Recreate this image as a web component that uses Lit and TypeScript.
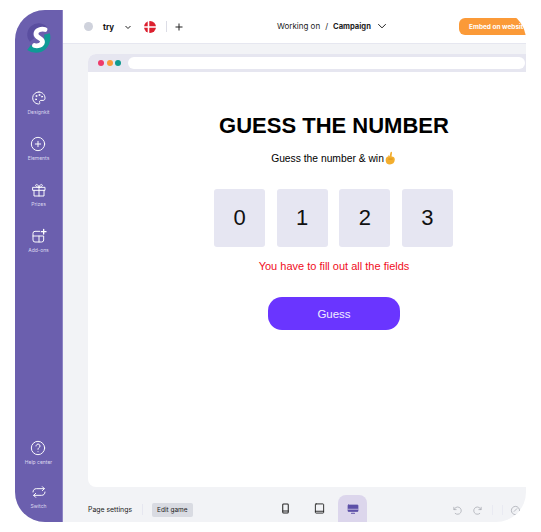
import { LitElement, html, css, svg } from "lit";
import { customElement } from "lit/decorators.js";

const I = (body: unknown, s = 16, vb = 24, sw = 1.45) => html`<svg width=${s} height=${s} viewBox="0 0 ${vb} ${vb}" fill="none" stroke="currentColor" stroke-width=${sw} stroke-linecap="round" stroke-linejoin="round">${body}</svg>`;

const side = [
  ["Designkit", svg`<path d="M12 3a9 9 0 0 0-1 18c2 .2 2.600-1 2-2.400-.7-1.600.2-3 1.900-3H18c2 0 3-1.300 3-3.400C21 7 17 3 12 3z"/><circle cx="8" cy="9" r=".8"/><circle cx="12.500" cy="7.500" r=".8"/><circle cx="16.500" cy="10" r=".8"/><circle cx="7.500" cy="14" r=".8"/>`],
  ["Elements", svg`<circle cx="12" cy="12" r="10"/><path d="M12 8v8M8 12h8"/>`],
  ["Prizes", svg`<rect x="3" y="8" width="18" height="4.500"/><path d="M4.500 12.500V21h15v-8.500M12 8v13M12 8C9 8 7 6.800 7 5s3.500-2.500 5 3c1.500-5.500 5-4.800 5-3s-2 3-5 3z"/>`],
  ["Add-ons", svg`<path d="M13 5H6a3 3 0 0 0-3 3v10a3 3 0 0 0 3 3h10a3 3 0 0 0 3-3v-6H3M12 12v9"/><path d="M19 2v7M15.500 5.500h7" stroke-width="2"/>`],
];

@customElement("app-root")
export class AppRoot extends LitElement {
  static styles = css`
    :host { display: block; width: 541px; height: 532px; background: #fff; font-family: "Inter", "Liberation Sans", sans-serif; padding: 10px 15px; box-sizing: border-box; overflow: hidden; }
    .win { width: 511px; height: 512px; border-radius: 30px; overflow: hidden; display: flex; background: #f2f3f6; }
    .side { width: 48px; flex: none; background: #6b5fae; border-right: 1px solid #8d84c4; box-sizing: border-box; color: #fff; display: flex; flex-direction: column; align-items: center; padding-top: 11px; }
    .logo { margin-bottom: 35px; display: block; flex: none; }
    .item { display: flex; flex-direction: column; align-items: center; gap: 3px; font-size: 5px; line-height: 6px; height: 46px; flex: none; color: #dcd9ef; white-space: nowrap; }
    .item svg { color: #fff; display: block; }
    .item.help { height: 44px; }
    .item.sw { height: 38px; }
    .spacer { flex: 1; }
    .main { flex: 1; min-width: 0; display: flex; flex-direction: column; }
    .top { height: 34px; flex: none; background: #fff; border-bottom: 1px solid #e6e7f0; box-sizing: border-box; display: flex; align-items: center; font-size: 8px; color: #222; padding-left: 21px; position: relative; }
    .dot { width: 9px; height: 9px; border-radius: 50%; background: #cfd2dc; }
    .try { font-weight: 700; font-size: 8px; margin-left: 10px; color: #111; }
    .flag { margin-left: 12px; display: block; }
    .vsep { width: 1px; height: 11px; background: #dcdde6; margin-left: 10px; }
    .plus { margin-left: 8px; display: block; color: #222; }
    .chev { display: block; margin-left: 10px; color: #222; }
    .center { position: absolute; left: 214px; top: 0; height: 32px; display: flex; align-items: center; gap: 5px; white-space: nowrap; }
    .center b { font-weight: 700; font-size: 7.600px; }
    .center .chev { margin-left: 1px; }
    .embed { position: absolute; left: 396px; top: 8px; width: 80px; height: 17px; background: #fb9a38; color: #fff; font-size: 6.500px; font-weight: 700; border-radius: 6px; display: flex; align-items: center; padding-left: 10px; box-sizing: border-box; white-space: nowrap; overflow: hidden; }
    .stage { flex: 1; min-height: 0; padding: 10px 0 0 25px; display: flex; flex-direction: column; }
    .browser { width: 438px; height: 433px; flex: none; background: #fff; border-radius: 8px 0 0 8px; overflow: hidden; display: flex; flex-direction: column; }
    .bar { height: 18px; flex: none; background: #e6e6f0; display: flex; align-items: center; padding-left: 10px; gap: 2.500px; }
    .bar i { width: 6px; height: 6px; border-radius: 50%; display: block; }
    .addr { flex: 1; height: 12px; background: #fff; border-radius: 6px; margin: 0 1px 0 4px; }
    .game { flex: 1; display: flex; flex-direction: column; align-items: center; padding-left: 54px; color: #000; font-family: "Liberation Sans", Arial, sans-serif; }
    h1 { margin: 41px 0 0; font-size: 22px; line-height: 26px; font-weight: 700; white-space: nowrap; }
    .sub { margin-top: 13px; font-size: 10.300px; line-height: 14px; display: flex; align-items: center; }
    .sub svg { display: block; margin-top: -2px; }
    .boxes { margin-top: 23px; display: flex; gap: 11.300px; margin-right: 1px; }
    .box { width: 51.300px; height: 58px; background: #e6e6f2; border-radius: 3px; display: flex; align-items: center; justify-content: center; font-size: 22px; color: #111; }
    .err { margin-top: 12px; font-size: 11px; line-height: 14px; color: #f00d1c; }
    .btn { margin-top: 24px; width: 132px; height: 33px; background: #6a35ff; color: #f1edff; border-radius: 14px; display: flex; align-items: center; justify-content: center; font-size: 11.500px; }
    .foot { flex: 1; display: flex; align-items: center; padding-top: 10px; box-sizing: border-box; font-size: 6.900px; color: #222; position: relative; }
    .fs { width: 1px; height: 11px; background: #e6e7f0; margin: 0 9px 0 10px; }
    .edit { background: #d9dbe2; border-radius: 2px; padding: 0 5px; height: 14px; display: flex; align-items: center; font-size: 6.500px; }
    .dev { position: absolute; bottom: 0; left: 183px; display: flex; align-items: flex-end; }
    .dev span { width: 29px; height: 27px; display: flex; align-items: center; justify-content: center; border-radius: 8px 8px 0 0; color: #222; margin-right: 4.500px; }
    .dev .on { background: #dcd6ec; color: #5d50a8; }
    .tools { position: absolute; left: 364px; bottom: 6px; height: 12px; display: flex; align-items: center; color: #a9abb3; }
    .tools .s { width: 1px; height: 10px; background: #e9eaf2; margin-left: 9px; }
    .tools svg { display: block; }
    .gap9 { width: 9px; }
    .gap7 { width: 7px; }
  `;
  render() {
    return html`<div class="win">
      <aside class="side">
        <svg class="logo" width="26" height="34" viewBox="0 0 26 34" fill="none">
          <path d="M19 8A8.500 8.500 0 1 0 6 19" stroke="#5a4ea0" stroke-width="5.500"/>
          <path d="M21 13C23 22 17 28 12 28.500C8 29 5 28 3 26.500" stroke="#0f9a96" stroke-width="6"/>
          <path d="M19 8.500C15 7.500 10 9 10 13C10 17 17 17 16.500 21C16 24 12 25.500 8.500 24.500" stroke="#fff" stroke-width="4.800" stroke-linecap="round"/>
        </svg>
        ${side.map(([t, p]) => html`<div class="item">${I(p)}<span>${t}</span></div>`)}
        <div class="spacer"></div>
        <div class="item help">${I(svg`<circle cx="12" cy="12" r="10"/><path d="M9 9a3 3 0 1 1 4.500 2.600c-1 .6-1.500 1.200-1.500 2.400M12 17.500v.1"/>`)}<span>Help center</span></div>
        <div class="item sw">${I(svg`<path d="M3 12c0-3 2-5 5-5h12M17 4l3 3-3 3M21 12c0 3-2 5-5 5H4M7 20l-3-3 3-3"/>`)}<span>Switch</span></div>
      </aside>
      <div class="main">
        <header class="top">
          <span class="dot"></span><span class="try">try</span>
          <svg class="chev" width="8" height="8" viewBox="0 0 8 8" fill="none" stroke="currentColor"><path d="M1.500 3l2.500 2.500L6.500 3"/></svg>
          <svg class="flag" width="12" height="12" viewBox="0 0 12 12"><circle cx="6" cy="6" r="6" fill="#dc1f2e"/><path d="M0 6h12M4.500 0v12" stroke="#fff" stroke-width="1.600"/></svg>
          <span class="vsep"></span>
          <svg class="plus" width="8" height="8" viewBox="0 0 8 8" stroke="currentColor"><path d="M4 .5v7M.5 4h7"/></svg>
          <div class="center"><span>Working on</span><span>/</span><b>Campaign</b>
            <svg class="chev" width="10" height="10" viewBox="0 0 8 8" fill="none" stroke="currentColor" stroke-width=".8"><path d="M1 2.500l3 3 3-3"/></svg></div>
          <div class="embed">Embed on website</div>
        </header>
        <div class="stage">
          <section class="browser">
            <div class="bar"><i style="background:#ee3a6a"></i><i style="background:#fb9a38"></i><i style="background:#0f9a8e"></i><div class="addr"></div></div>
            <div class="game">
              <h1>GUESS THE NUMBER</h1>
              <div class="sub">Guess the number &amp; win<svg width="13" height="14" viewBox="0 0 12 13"><path d="M1.500 8.500c0-2 1-3.500 2.500-3.500V3.500l1 1.500 1-3.500c.3-1 1.500-1 1.400.2L7 5c2 0 3 1 3 3 0 3-2 4.500-4.500 4.500S1.500 11 1.500 8.500z" fill="#f3ae2e"/><path d="M4 7.500h4" stroke="#c98512" stroke-width=".6"/></svg></div>
              <div class="boxes"><div class="box">0</div><div class="box">1</div><div class="box">2</div><div class="box">3</div></div>
              <div class="err">You have to fill out all the fields</div>
              <div class="btn">Guess</div>
            </div>
          </section>
          <footer class="foot">
            <span>Page settings</span><span class="fs"></span><span class="edit">Edit game</span>
            <div class="dev">
              <span>${I(svg`<rect x="6" y="2" width="12" height="20" rx="2"/><path d="M6 17.500h12"/>`, 11, 24, 2.2)}</span>
              <span>${I(svg`<rect x="3" y="2" width="18" height="20" rx="1.500"/><path d="M3 18h18"/>`, 11, 24, 2)}</span>
              <span class="on">${I(svg`<rect x="2" y="4" width="20" height="13" rx="1" fill="currentColor"/><path d="M2 12.500h20" stroke="#dcd6ec"/><path d="M9 20.500h6" stroke-width="2.200"/>`, 12)}</span>
            </div>
            <div class="tools">
              ${I(svg`<path d="M4 5v5h5M4.500 10A8 8 0 1 1 7 18.500"/>`, 11, 24, 1.7)}
              <span class="gap9"></span>
              ${I(svg`<path d="M20 5v5h-5M19.500 10A8 8 0 1 0 17 18.500"/>`, 11, 24, 1.7)}
              <span class="s"></span><span class="s"></span>
              <span class="gap7"></span>
              ${I(svg`<circle cx="12" cy="12" r="9"/><path d="M9 14l6-6"/>`, 11, 24, 1.7)}
            </div>
          </footer>
        </div>
      </div>
    </div>`;
  }
}
